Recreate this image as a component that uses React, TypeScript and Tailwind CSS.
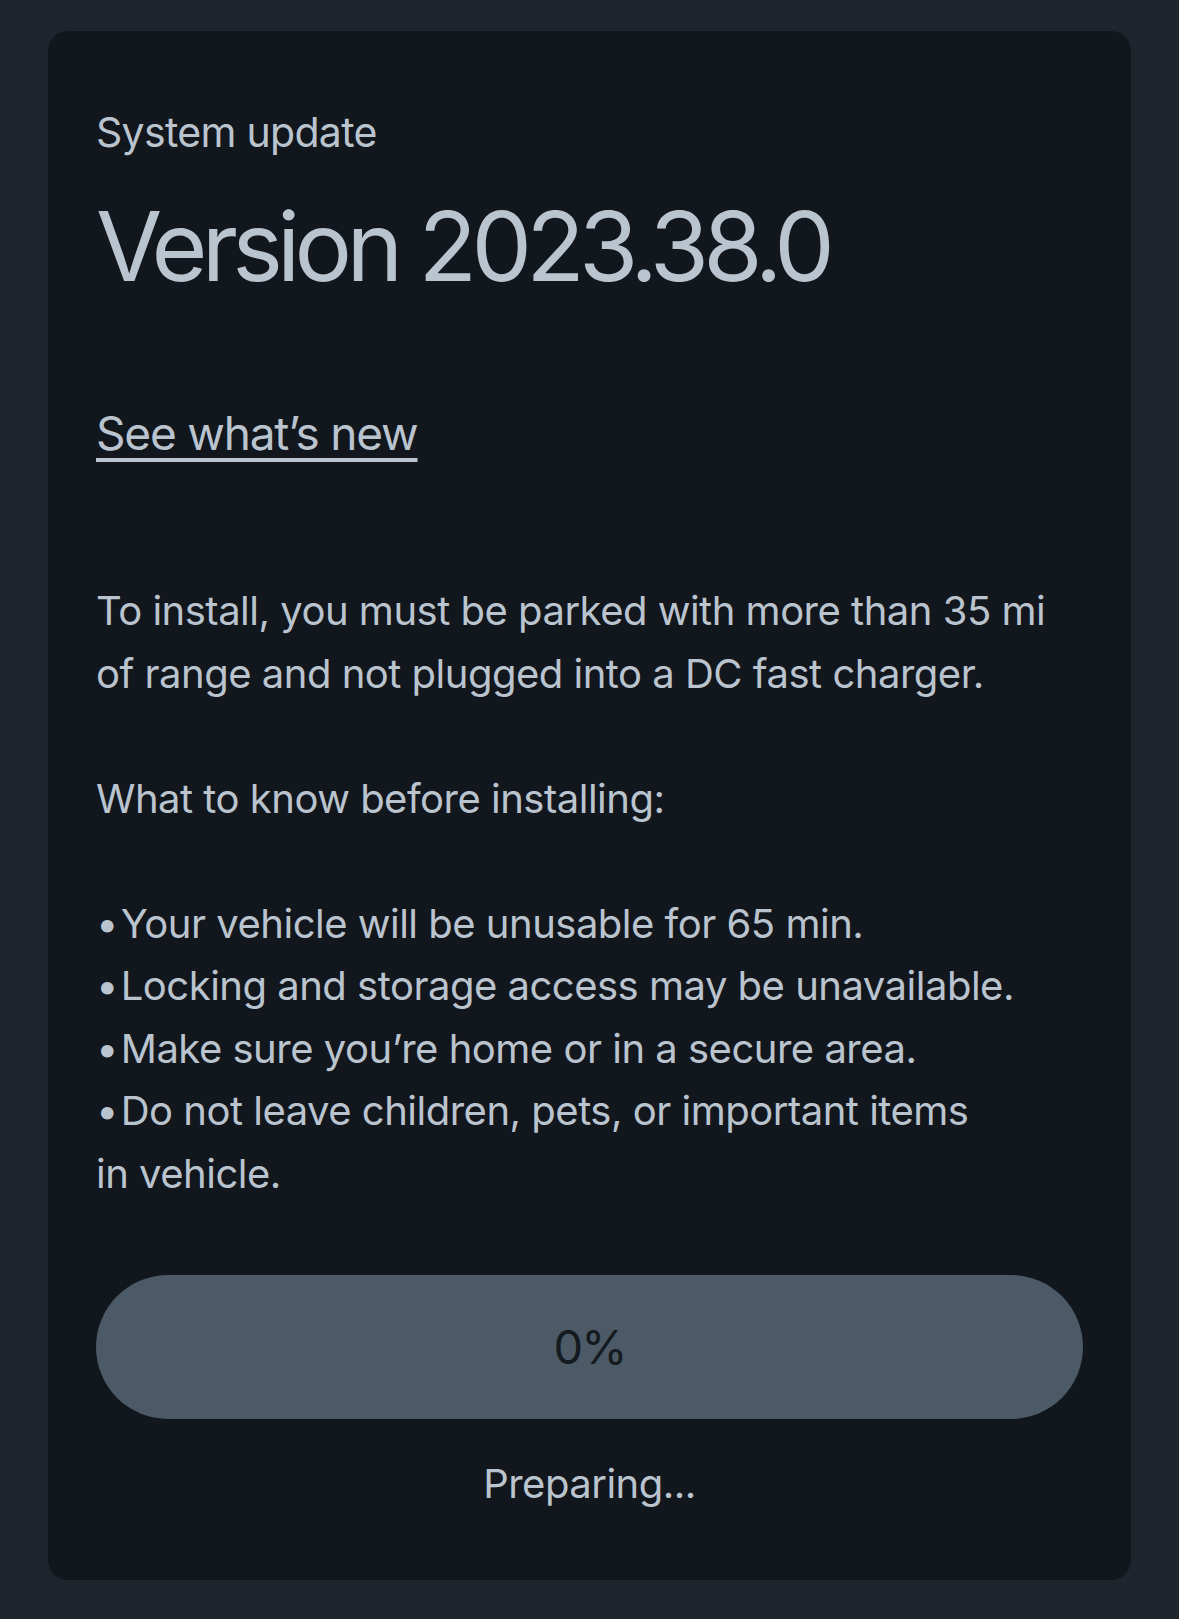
export default function App() {
  const intro = [
    "To install, you must be parked with more than 35 mi",
    "of range and not plugged into a DC fast charger.",
    "",
    "What to know before installing:",
    "",
  ];
  const bullets = [
    "Your vehicle will be unusable for 65 min.",
    "Locking and storage access may be unavailable.",
    "Make sure you’re home or in a secure area.",
    "Do not leave children, pets, or important items",
  ];

  return (
    <div className="min-h-[1619px] bg-[#1f252d] px-[48px] pt-[31px] pb-[39px] font-['Inter','Liberation_Sans',sans-serif]">
      <div className="rounded-[20px] bg-[#12161d] px-[48px] pt-[80px] pb-[76px] text-[#bac4ce]">
        <div className="text-[41px] leading-[42px] tracking-[-0.7px]">System update</div>
        <h1 className="mt-[45px] text-[96px] leading-[96px] tracking-[-0.06em]">Version 2023.38.0</h1>
        <a
          href="#"
          className="mt-[116px] inline-block text-[46px] leading-[46px] tracking-[-1.2px] underline decoration-[4px] underline-offset-[8px]"
        >
          See what’s new
        </a>
        <div className="mt-[124px] text-[40px] leading-[62.5px] tracking-[-0.5px]">
          {intro.map((l, i) => (
            <div key={i} className="h-[62.5px] whitespace-nowrap">
              {l}
            </div>
          ))}
          {bullets.map((b) => (
            <div key={b} className="h-[62.5px] whitespace-nowrap">
              <span className="mr-[-8px]">•</span> {b}
            </div>
          ))}
          <div className="h-[62.5px] whitespace-nowrap">in vehicle.</div>
        </div>
        <div className="mt-[70px] flex h-[144px] items-center justify-center rounded-full bg-[#4b5a66] text-[47px] tracking-[-2px] text-[#141a20]">
          0%
        </div>
        <div className="mt-[45px] text-center text-[40px] leading-[40px] tracking-[-0.5px]">Preparing...</div>
      </div>
    </div>
  );
}
